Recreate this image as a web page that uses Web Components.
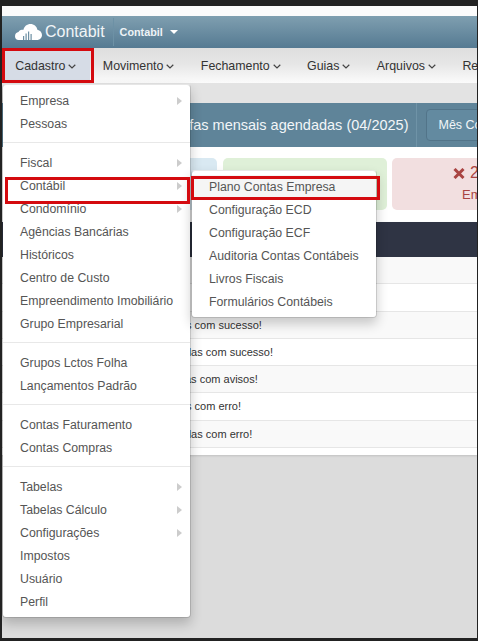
<!DOCTYPE html>
<html lang="pt-BR">
<head>
<meta charset="utf-8">
<title>Contabit</title>
<style>
    html, body { margin: 0; height: 641px; overflow: hidden; background: #222; font-family: "Liberation Sans", Arial, sans-serif; }
</style>
</head>
<body>
<app-shell>
    <top-bar></top-bar>
    <nav-bar>
        <nav-item active>Cadastro</nav-item>
        <nav-item>Movimento</nav-item>
        <nav-item>Fechamento</nav-item>
        <nav-item>Guias</nav-item>
        <nav-item>Arquivos</nav-item>
        <nav-item plain>Re</nav-item>
    </nav-bar>
    <task-panel></task-panel>
    <stat-row>
        <stat-card kind="info"></stat-card>
        <stat-card kind="ok"></stat-card>
        <stat-card kind="err"></stat-card>
    </stat-row>
    <task-table>
        <task-row></task-row>
        <task-row></task-row>
        <task-row style="--start: 184px">s com sucesso!</task-row>
        <task-row style="--start: 183px">das com sucesso!</task-row>
        <task-row style="--start: 183px">as com avisos!</task-row>
        <task-row style="--start: 184px">s com erro!</task-row>
        <task-row style="--start: 183px">das com erro!</task-row>
    </task-table>

    <drop-menu style="left: 0; top: 78px; width: 189px">
        <menu-item arrow>Empresa</menu-item>
        <menu-item>Pessoas</menu-item>
        <menu-divider></menu-divider>
        <menu-item arrow>Fiscal</menu-item>
        <menu-item arrow>Contábil</menu-item>
        <menu-item arrow>Condomínio</menu-item>
        <menu-item>Agências Bancárias</menu-item>
        <menu-item>Históricos</menu-item>
        <menu-item>Centro de Custo</menu-item>
        <menu-item>Empreendimento Imobiliário</menu-item>
        <menu-item>Grupo Empresarial</menu-item>
        <menu-divider></menu-divider>
        <menu-item>Grupos Lctos Folha</menu-item>
        <menu-item>Lançamentos Padrão</menu-item>
        <menu-divider></menu-divider>
        <menu-item>Contas Faturamento</menu-item>
        <menu-item>Contas Compras</menu-item>
        <menu-divider></menu-divider>
        <menu-item arrow>Tabelas</menu-item>
        <menu-item arrow>Tabelas Cálculo</menu-item>
        <menu-item arrow>Configurações</menu-item>
        <menu-item>Impostos</menu-item>
        <menu-item>Usuário</menu-item>
        <menu-item>Perfil</menu-item>
    </drop-menu>

    <drop-menu style="left: 189px; top: 164px; width: 186px">
        <menu-item hover>Plano Contas Empresa</menu-item>
        <menu-item>Configuração ECD</menu-item>
        <menu-item>Configuração ECF</menu-item>
        <menu-item>Auditoria Contas Contábeis</menu-item>
        <menu-item>Livros Fiscais</menu-item>
        <menu-item>Formulários Contábeis</menu-item>
    </drop-menu>

    <mark-box style="left: 0; top: 42px; width: 92px; height: 35px"></mark-box>
    <mark-box style="left: 3px; top: 171px; width: 185px; height: 27px"></mark-box>
    <mark-box style="left: 189px; top: 170px; width: 189px; height: 24px"></mark-box>
</app-shell>

<script>
class AppShell extends HTMLElement {
    constructor() {
        super();
        this.attachShadow({ mode: 'open' });
    }

    connectedCallback() {
        this.shadowRoot.innerHTML = `
            <style>
                :host{
                    display: flex;
                    flex-direction: column;
                    position: relative;
                    width: 475px;
                    height: 632px;
                    margin: 6px 0 0 2px;
                    overflow: hidden;
                    background-color: #dcdcdc;
                }
            </style>
            <slot></slot>
        `;
    }
}
customElements.define('app-shell', AppShell);

class TopBar extends HTMLElement {
    constructor() {
        super();
        this.attachShadow({ mode: 'open' });
    }

    connectedCallback() {
        this.shadowRoot.innerHTML = `
            <style>
                :host{
                    display: block;
                    flex: none;
                    padding-top: 10px;
                    background-color: #fbfbfb;
                }
                .bar{
                    display: flex;
                    align-items: center;
                    height: 32px;
                    padding-left: 13px;
                    background: linear-gradient(#7f9fb0, #557a92);
                    color: #fff;
                }
                svg{
                    display: block;
                    flex: none;
                }
                .brand{
                    margin-left: 3px;
                    font-size: 16px;
                    color: #f1f5f7;
                }
                .sep{
                    width: 1px;
                    height: 28px;
                    margin: 0 6px 0 8px;
                    background-color: #6d91a5;
                }
                .mod{
                    font-size: 10.800px;
                    font-weight: bold;
                    color: #eef3f6;
                }
                .caret{
                    width: 0;
                    height: 0;
                    margin-left: 7px;
                    border-top: 4px solid #fff;
                    border-left: 4px solid transparent;
                    border-right: 4px solid transparent;
                }
            </style>
            <div class="bar">
                <svg width="27" height="16" viewBox="0 0 27 16">
                    <path fill="#fff" d="M3.500 16C1.400 16 0 14.200 0 12.200 0 10 1.500 8.400 3.500 8.100 4 6.700 5.300 5.600 7 5.700 7.400 5.700 7.900 5.800 8.300 6 9.200 2.300 12 0 15.500 0c3.500 0 6.200 2.300 6.900 5.700C25 6.200 27 8.300 27 11c0 2.800-2.200 5-5 5z"/>
                    <path fill="#6c8fa3" d="M8 16v-4h1.200v4zM10.500 16V9.500h1.200V16zM13 16V7.500h1.200V16zM15.500 16v-6h1.200v6z"/>
                </svg>
                <span class="brand">Contabit</span>
                <span class="sep"></span>
                <span class="mod">Contabil</span>
                <span class="caret"></span>
            </div>
        `;
    }
}
customElements.define('top-bar', TopBar);

class NavBar extends HTMLElement {
    constructor() {
        super();
        this.attachShadow({ mode: 'open' });
    }

    connectedCallback() {
        this.shadowRoot.innerHTML = `
            <style>
                :host{
                    display: flex;
                    flex: none;
                    height: 35px;
                    background: linear-gradient(#dedede, #e6e6e6 45%, #fbfbfb);
                    white-space: nowrap;
                }
            </style>
            <slot></slot>
        `;
    }
}
customElements.define('nav-bar', NavBar);

class NavItem extends HTMLElement {
    constructor() {
        super();
        this.attachShadow({ mode: 'open' });
    }

    connectedCallback() {
        const chevron = this.hasAttribute('plain') ? '' : `
            <svg width="8" height="5" viewBox="0 0 8 5">
                <path d="M.7.8 4 4 7.300.8" fill="none" stroke="#444" stroke-width="1.200"/>
            </svg>`;

        this.shadowRoot.innerHTML = `
            <style>
                :host{
                    display: flex;
                    align-items: center;
                    gap: 3px;
                    flex: none;
                    padding: 0 13.200px;
                    font-size: 12.400px;
                    color: #333;
                }
                :host([active]){
                    background-color: #d6dce6;
                }
                svg{
                    margin-top: 2px;
                }
            </style>
            <slot></slot>${chevron}
        `;
    }
}
customElements.define('nav-item', NavItem);

class TaskPanel extends HTMLElement {
    constructor() {
        super();
        this.attachShadow({ mode: 'open' });
    }

    connectedCallback() {
        this.shadowRoot.innerHTML = `
            <style>
                :host{
                    display: block;
                    flex: none;
                    padding-top: 20px;
                    background-color: #e3e3e3;
                }
                .panel{
                    display: flex;
                    align-items: center;
                    height: 44px;
                    padding-left: 159px;
                    background-color: #5f8499;
                    white-space: nowrap;
                }
                h2{
                    flex: none;
                    margin: 0 8px 0 0;
                    font-size: 14.500px;
                    font-weight: normal;
                    color: #f2f6f8;
                }
                .wrap{
                    flex: none;
                    align-self: stretch;
                    display: flex;
                    align-items: center;
                    padding-left: 9px;
                    border-left: 1px solid #6f93a7;
                }
                .btn{
                    width: 70px;
                    height: 30px;
                    line-height: 30px;
                    padding-left: 11px;
                    border-radius: 4px;
                    border: 1px solid #527489;
                    background-color: #638aa0;
                    font-size: 12.500px;
                    color: #f2f6f8;
                }
            </style>
            <div class="panel">
                <h2>Tarefas mensais agendadas (04/2025)</h2>
                <div class="wrap"><div class="btn">Mês Co</div></div>
            </div>
        `;
    }
}
customElements.define('task-panel', TaskPanel);

class StatRow extends HTMLElement {
    constructor() {
        super();
        this.attachShadow({ mode: 'open' });
    }

    connectedCallback() {
        this.shadowRoot.innerHTML = `
            <style>
                :host{
                    display: flex;
                    flex: none;
                    gap: 5px;
                    padding: 11px 0 12px 51px;
                    background-color: #fff;
                }
            </style>
            <slot></slot>
        `;
    }
}
customElements.define('stat-row', StatRow);

class StatCard extends HTMLElement {
    constructor() {
        super();
        this.attachShadow({ mode: 'open' });
    }

    connectedCallback() {
        const kind = this.getAttribute('kind');
        let body = '';
        if (kind === 'ok') {
            body = `<div class="num center">$ 350</div>`;
        }
        if (kind === 'err') {
            body = `
                <div class="num">
                    <svg width="12" height="11" viewBox="0 0 12 11">
                        <path d="M1.500 1 10.500 10M10.500 1 1.500 10" stroke="#a94442" stroke-width="3"/>
                    </svg>
                    <span>2</span>
                </div>
                <div class="label">Em</div>
            `;
        }

        this.shadowRoot.innerHTML = `
            <style>
                :host{
                    display: block;
                    flex: none;
                    box-sizing: border-box;
                    width: 164px;
                    height: 52px;
                    padding-top: 6px;
                    border-radius: 5px;
                    white-space: nowrap;
                }
                :host([kind="info"]){ background-color: #d9e9f2; margin-right: 1px; }
                :host([kind="ok"]){ background-color: #dff0d8; color: #3c763d; }
                :host([kind="err"]){ background-color: #f2dfe0; color: #a94442; padding-left: 61px; }
                .num{
                    display: flex;
                    align-items: center;
                    gap: 5px;
                    font-size: 16px;
                    line-height: 18px;
                }
                .center{
                    justify-content: center;
                    margin-top: 4px;
                    padding-left: 10px;
                }
                .label{
                    margin: 5px 0 0 9px;
                    font-size: 13px;
                    line-height: 16px;
                }
            </style>
            ${body}
        `;
    }
}
customElements.define('stat-card', StatCard);

class TaskTable extends HTMLElement {
    constructor() {
        super();
        this.attachShadow({ mode: 'open' });
    }

    connectedCallback() {
        this.shadowRoot.innerHTML = `
            <style>
                :host{
                    display: block;
                    flex: none;
                    padding-bottom: 7px;
                    background-color: #fff;
                    box-shadow: 0 1px 2px rgba(0, 0, 0, 0.12);
                }
                .head{
                    height: 35px;
                    background-color: #2f3444;
                }
                ::slotted(task-row:nth-of-type(odd)){
                    background-color: #f9f9f9;
                }
            </style>
            <div class="head"></div>
            <slot></slot>
        `;
    }
}
customElements.define('task-table', TaskTable);

class TaskRow extends HTMLElement {
    constructor() {
        super();
        this.attachShadow({ mode: 'open' });
    }

    connectedCallback() {
        this.shadowRoot.innerHTML = `
            <style>
                :host{
                    display: block;
                    box-sizing: border-box;
                    height: 27.300px;
                    line-height: 26px;
                    padding-left: var(--start, 0);
                    border-bottom: 1px solid #e6e6e6;
                    font-size: 11px;
                    color: #333;
                    white-space: nowrap;
                }
            </style>
            <slot></slot>
        `;
    }
}
customElements.define('task-row', TaskRow);

class DropMenu extends HTMLElement {
    constructor() {
        super();
        this.attachShadow({ mode: 'open' });
    }

    connectedCallback() {
        this.shadowRoot.innerHTML = `
            <style>
                :host{
                    display: block;
                    position: absolute;
                    box-sizing: border-box;
                    padding: 4px 0;
                    border: 1px solid rgba(0, 0, 0, 0.12);
                    border-top-color: #e6e6e6;
                    border-radius: 4px;
                    background-color: #fff;
                    background-clip: padding-box;
                    box-shadow: 0 6px 12px rgba(0, 0, 0, 0.2);
                }
            </style>
            <slot></slot>
        `;
    }
}
customElements.define('drop-menu', DropMenu);

class MenuItem extends HTMLElement {
    constructor() {
        super();
        this.attachShadow({ mode: 'open' });
    }

    connectedCallback() {
        this.shadowRoot.innerHTML = `
            <style>
                :host{
                    display: flex;
                    align-items: center;
                    justify-content: space-between;
                    height: 23px;
                    padding: 0 8px 0 17px;
                    font-size: 12.300px;
                    color: #555;
                    white-space: nowrap;
                }
                :host([hover]){
                    background-color: #f5f5f5;
                }
                .arrow{
                    width: 0;
                    height: 0;
                    border-left: 5px solid #ccc;
                    border-top: 4.500px solid transparent;
                    border-bottom: 4.500px solid transparent;
                }
            </style>
            <span><slot></slot></span>
            ${this.hasAttribute('arrow') ? '<span class="arrow"></span>' : ''}
        `;
    }
}
customElements.define('menu-item', MenuItem);

class MenuDivider extends HTMLElement {
    constructor() {
        super();
        this.attachShadow({ mode: 'open' });
    }

    connectedCallback() {
        this.shadowRoot.innerHTML = `
            <style>
                :host{
                    display: block;
                    height: 1px;
                    margin: 7px 0 8px;
                    background-color: #e8e8e8;
                }
            </style>
        `;
    }
}
customElements.define('menu-divider', MenuDivider);

class MarkBox extends HTMLElement {
    constructor() {
        super();
        this.attachShadow({ mode: 'open' });
    }

    connectedCallback() {
        this.shadowRoot.innerHTML = `
            <style>
                :host{
                    display: block;
                    position: absolute;
                    box-sizing: border-box;
                    border: 3px solid #d40a0f;
                    pointer-events: none;
                }
            </style>
        `;
    }
}
customElements.define('mark-box', MarkBox);
</script>
</body>
</html>
